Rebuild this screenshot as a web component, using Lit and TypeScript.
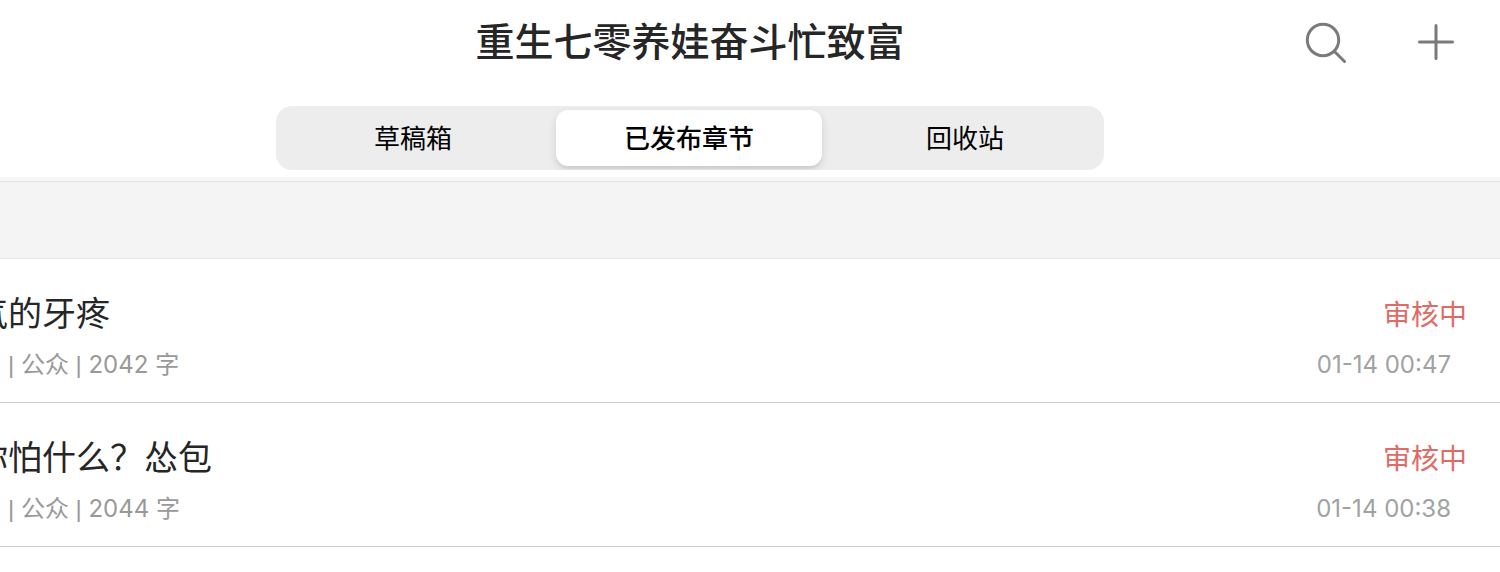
import { LitElement, html, css } from "lit";
import { customElement, property, state } from "lit/decorators.js";
import { classMap } from "lit/directives/class-map.js";

interface Chapter {
  title: string;
  visibility: string;
  words: number;
  status: string;
  time: string;
}

const CHAPTERS: Chapter[] = [
  { title: "气的牙疼", visibility: "公众", words: 2042, status: "审核中", time: "01-14 00:47" },
  { title: "你怕什么？怂包", visibility: "公众", words: 2044, status: "审核中", time: "01-14 00:38" },
];

const TABS = ["草稿箱", "已发布章节", "回收站"];

@customElement("chapter-row")
class ChapterRow extends LitElement {
  @property({ attribute: false }) chapter!: Chapter;

  static styles = css`
    :host {
      display: block;
      border-bottom: 1px solid #d1d1d1;
    }
    .row {
      display: flex;
      justify-content: space-between;
      padding: 31px 33px 19px 94px;
    }
    .title {
      margin: 0;
      font-size: 34px;
      font-weight: 400;
      line-height: 48px;
      color: #262626;
    }
    .meta,
    .time {
      margin: 9px 0 0;
      font-size: 24px;
      line-height: 36px;
      color: #999;
    }
    .meta {
      padding-left: 34px;
    }
    .bar {
      font-family: "Liberation Sans", sans-serif;
    }
    .side {
      text-align: right;
    }
    .status {
      margin: 0;
      font-size: 28px;
      line-height: 50px;
      color: #df6b67;
    }
    .time {
      margin-top: 7px;
      padding-right: 16px;
      color: #a0a2a4;
    }
  `;

  render() {
    const c = this.chapter;
    return html`
      <article class="row">
        <div>
          <h2 class="title">${c.title}</h2>
          <p class="meta"><span class="bar">| </span>${c.visibility}<span class="bar"> | </span>${c.words} 字</p>
        </div>
        <div class="side">
          <p class="status">${c.status}</p>
          <p class="time">${c.time}</p>
        </div>
      </article>
    `;
  }
}

@customElement("app-root")
class AppRoot extends LitElement {
  @state() private active = 1;

  static styles = css`
    :host {
      display: block;
      min-height: 100vh;
      overflow: hidden;
      background: #fff;
      font-family: Inter, "Noto Sans CJK SC", sans-serif;
    }
    .page {
      margin-left: -120px;
    }
    .bar {
      display: grid;
      grid-template-columns: 1fr auto 1fr;
      align-items: center;
      height: 84px;
      padding: 0 42px;
    }
    .heading {
      grid-column: 2;
      margin: 0;
      font-size: 39px;
      font-weight: 500;
      line-height: 56px;
      color: #262626;
    }
    .actions {
      display: flex;
      justify-content: flex-end;
      gap: 66px;
    }
    .icon {
      display: block;
      padding: 0;
      border: 0;
      background: none;
      color: #7a7a7a;
    }
    .icon svg {
      display: block;
    }
    .tabs {
      display: grid;
      grid-template-columns: repeat(3, 1fr);
      max-width: 828px;
      height: 64px;
      margin: 22px auto 7px;
      border-radius: 16px;
      background: #ededed;
      overflow: hidden;
    }
    .tab {
      margin: 4px 6px 4px 4px;
      padding: 2px 0 0;
      border: 0;
      border-radius: 12px;
      background: none;
      font: 400 26px/36px Inter, "Noto Sans CJK SC", sans-serif;
      color: #000;
    }
    .tab.on {
      background: #fff;
      font-weight: 500;
      box-shadow: 0 3px 8px rgba(0, 0, 0, 0.12), 0 3px 1px rgba(0, 0, 0, 0.04);
    }
    .band {
      height: 76px;
      border-top: 1px solid #e2e2e2;
      border-bottom: 1px solid #e6e6e6;
      background: #f4f4f4;
    }
    .edge {
      height: 4px;
      background: #f7f7f7;
    }
  `;

  render() {
    return html`
      <div class="page">
        <header class="bar">
          <span></span>
          <h1 class="heading">重生七零养娃奋斗忙致富</h1>
          <div class="actions">
            <button class="icon" aria-label="搜索">
              <svg width="44" height="44" viewBox="0 0 44 44" fill="none" stroke="currentColor" stroke-width="3" stroke-linecap="round">
                <circle cx="19" cy="20" r="15.7" />
                <path d="M30.5 31.5 40.5 41.5" />
              </svg>
            </button>
            <button class="icon" aria-label="新建">
              <svg width="44" height="44" viewBox="0 0 44 44" fill="none" stroke="currentColor" stroke-width="3" stroke-linecap="round">
                <path d="M5.5 22H38.5M22 5.5V38.5" />
              </svg>
            </button>
          </div>
        </header>
        <nav class="tabs" role="tablist">
          ${TABS.map(
            (label, i) => html`<button
              class=${classMap({ tab: true, on: i === this.active })}
              role="tab"
              aria-selected=${i === this.active}
              @click=${() => (this.active = i)}
            >${label}</button>`
          )}
        </nav>
        <div class="edge"></div>
        <div class="band"></div>
        <main>
          ${CHAPTERS.map((c) => html`<chapter-row .chapter=${c}></chapter-row>`)}
        </main>
      </div>
    `;
  }
}
